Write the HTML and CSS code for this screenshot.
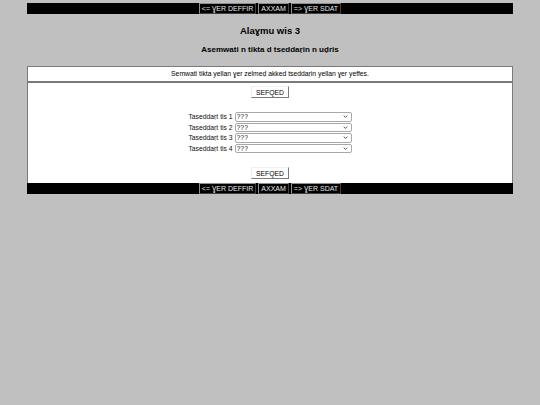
FILE: index.html
```html
<!DOCTYPE html>
<html>
<head>
    <title>Alaɣmu wis 3</title>
    <link rel="stylesheet" href="styles.css">
</head>
<body>
    <div class="page">
        <div class="navbar">
            <button class="nav-btn">&lt;= ƔER DEFFIR</button>
            <button class="nav-btn">AXXAM</button>
            <button class="nav-btn">=&gt; ƔER SDAT</button>
        </div>

        <h1>Alaɣmu wis 3</h1>
        <h2>Asemwati n tikta d tseddaṛin n uḍris</h2>

        <div class="exercise">
            <div class="instructions">Semwati tikta yellan ɣer zelmeḍ akked tseddaṛin yellan ɣer yeffes.</div>
            <div class="exercise-body">
                <button class="check-btn">SEFQED</button>

                <div class="answers">
                    <label class="answer-row">Taseddaṛt tis 1
                        <span class="select-wrap">
                            <select><option>???</option><option>1</option><option>2</option><option>3</option><option>4</option></select>
                            <svg class="chevron" viewBox="0 0 8 5"><path d="M1 1l3 3 3-3" fill="none" stroke="#333" stroke-width="1.4"/></svg>
                        </span>
                    </label>
                    <label class="answer-row">Taseddaṛt tis 2
                        <span class="select-wrap">
                            <select><option>???</option><option>1</option><option>2</option><option>3</option><option>4</option></select>
                            <svg class="chevron" viewBox="0 0 8 5"><path d="M1 1l3 3 3-3" fill="none" stroke="#333" stroke-width="1.4"/></svg>
                        </span>
                    </label>
                    <label class="answer-row">Taseddaṛt tis 3
                        <span class="select-wrap">
                            <select><option>???</option><option>1</option><option>2</option><option>3</option><option>4</option></select>
                            <svg class="chevron" viewBox="0 0 8 5"><path d="M1 1l3 3 3-3" fill="none" stroke="#333" stroke-width="1.4"/></svg>
                        </span>
                    </label>
                    <label class="answer-row">Taseddaṛt tis 4
                        <span class="select-wrap">
                            <select><option>???</option><option>1</option><option>2</option><option>3</option><option>4</option></select>
                            <svg class="chevron" viewBox="0 0 8 5"><path d="M1 1l3 3 3-3" fill="none" stroke="#333" stroke-width="1.4"/></svg>
                        </span>
                    </label>
                </div>

                <button class="check-btn">SEFQED</button>
            </div>
        </div>

        <div class="navbar">
            <button class="nav-btn">&lt;= ƔER DEFFIR</button>
            <button class="nav-btn">AXXAM</button>
            <button class="nav-btn">=&gt; ƔER SDAT</button>
        </div>
    </div>
</body>
</html>
```

FILE: styles.css
```css
body {
    font-family: 'Liberation Sans', Arial, sans-serif;
    background-color: #c0c0c0;
    color: #000;
    margin: 0;
    padding: 3px 0 0;
}
.page {
    width: 90%;
    margin: 0 auto;
}
.navbar {
    background-color: #000;
    display: flex;
    justify-content: center;
    gap: 2px;
    height: 11px;
}
.nav-btn {
    font-family: inherit;
    font-size: 7px;
    color: #e8e8e8;
    background-color: #000;
    border: 1px solid;
    border-color: #909090 #404040 #404040 #909090;
    padding: 0 2px;
    height: 11px;
    line-height: 9px;
    margin: 0;
}
h1 {
    font-size: 9.5px;
    text-align: center;
    margin: 11px 0 0;
    line-height: 12px;
}
h2 {
    font-size: 8px;
    text-align: center;
    margin: 8px 0 0;
    line-height: 10px;
}
.exercise {
    margin-top: 11px;
    background-color: #fff;
    border: 1px solid #7a7a7a;
    border-bottom: none;
}
.instructions {
    font-size: 6.8px;
    text-align: center;
    line-height: 14px;
    border-bottom: 2px solid #7a7a7a;
}
.exercise-body {
    display: flex;
    flex-direction: column;
    align-items: center;
    padding: 3px 0 4px;
}
.check-btn {
    font-family: inherit;
    font-size: 6.8px;
    color: #000;
    background-color: #fff;
    border: 1px solid;
    border-color: #f0f0f0 #7a7a7a #7a7a7a #f0f0f0;
    width: 38px;
    height: 12px;
    padding: 0;
    margin: 0;
}
.answers {
    display: flex;
    flex-direction: column;
    align-items: flex-end;
    margin: 14px 0 14px;
    gap: 1px;
}
.answer-row {
    font-size: 6.8px;
    color: #111;
    display: flex;
    align-items: center;
    gap: 2px;
    height: 9.5px;
}
.select-wrap {
    position: relative;
    display: block;
    height: 9.5px;
}
select {
    appearance: none;
    display: block;
    font-family: inherit;
    font-size: 6.8px;
    color: #222;
    background-color: #fff;
    border: 1px solid #a8a8a8;
    border-radius: 2px;
    width: 117px;
    height: 9.5px;
    line-height: 7px;
    padding: 0 1px;
    margin: 0;
}
.chevron {
    position: absolute;
    right: 4px;
    top: 3px;
    width: 5px;
    height: 3px;
    pointer-events: none;
}
```
